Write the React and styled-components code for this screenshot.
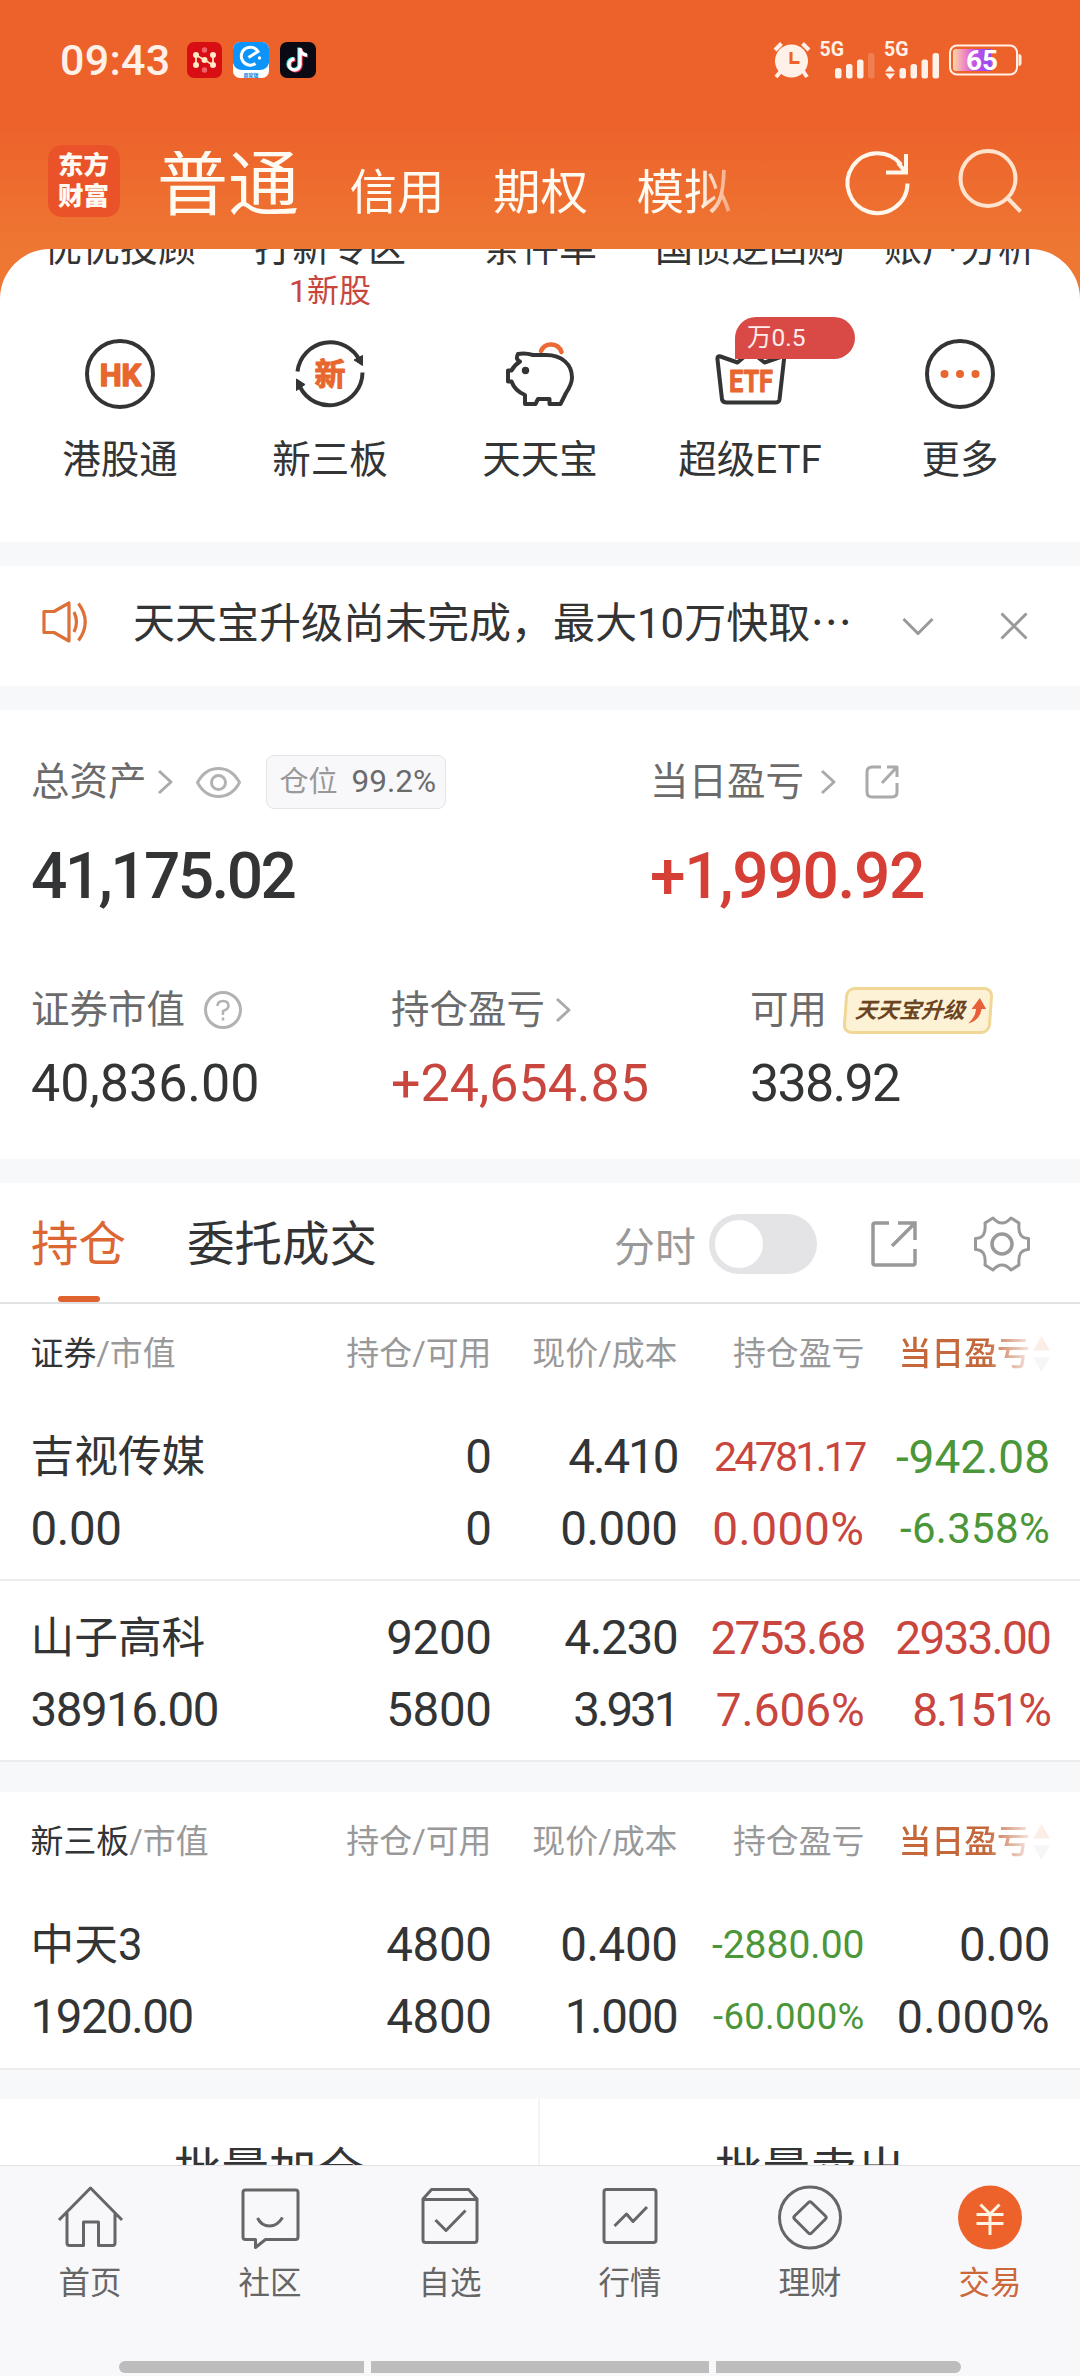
import React from "react";
import styled, { createGlobalStyle, css } from "styled-components";

const Global = createGlobalStyle`
  * { box-sizing: border-box; }
  body { margin: 0; background: #fff; }
  svg { display: block; flex: none; overflow: visible; }
`;

const sans = `Roboto, "Noto Sans CJK SC", sans-serif`;
const ink = "#333435";
const orange = "#dc6733";
const red = "#c9463f";
const green = "#4b9638";
const tones = { ink, red, green };

const Screen = styled.div`
  width: 1080px;
  height: 2376px;
  display: flex;
  flex-direction: column;
  overflow: hidden;
  background: #ee7733;
  color: ${ink};
  font-family: ${sans};
  white-space: nowrap;
`;

/* ---------- header ---------- */
const Header = styled.header`
  height: 249px;
  flex: none;
  background: linear-gradient(#ed622b 0, #ed622b 125px, #ee7733 249px);
`;
const StatusBar = styled.div`
  height: 120px;
  display: flex;
  align-items: center;
  padding: 0 58px 0 60px;
  color: #fff0e8;
`;
const Clock = styled.span`
  width: 127px;
  font-size: 43px;
  line-height: 50px;
  font-weight: 500;
  letter-spacing: 0.3px;
`;
const AppIcons = styled.div`
  display: flex;
  gap: 11px;
`;
const StatusRight = styled.div`
  margin-left: auto;
  display: flex;
  align-items: center;
`;
const NavBar = styled.div`
  height: 129px;
  display: flex;
  align-items: flex-start;
  padding: 25px 57px 0 48px;
  color: #fffaf2;
`;
const Logo = styled.div`
  width: 72px;
  height: 72px;
  border-radius: 14px;
  background: #ea5329;
  padding: 5px 10px;
  font-size: 25.5px;
  line-height: 31px;
  font-weight: 900;
  margin-right: 37px;
`;
const AccountTabs = styled.div`
  display: flex;
  align-items: baseline;
  width: 642px;
  height: 80px;
  gap: 48.5px;
  margin-top: 6px;
  mask-image: linear-gradient(90deg, #000 542px, rgba(0, 0, 0, 0.25) 582px);
`;
const AccountTab = styled.span`
  font-size: ${(p) => (p.$on ? 71 : 47.5)}px;
  line-height: 80px;
  margin: ${(p) => (p.$on ? "-6px 2px 0 0" : "0")};
`;
const NavIcons = styled.div`
  display: flex;
  gap: 49px;
  margin-left: auto;
  padding-top: 4px;
`;

/* ---------- shortcuts ---------- */
const Sheet = styled.section`
  height: 293px;
  flex: none;
  background: #fff;
  border-radius: 50px 50px 0 0;
  overflow: hidden;
`;
const FiveCols = styled.div`
  display: grid;
  grid-template-columns: repeat(5, 210px);
  justify-content: center;
  text-align: center;
`;
const TopLabels = styled(FiveCols)`
  margin-top: -26px;
  font-size: 38px;
  line-height: 50px;
`;
const HintRow = styled(FiveCols)`
  font-size: 32px;
  line-height: 36px;
  color: ${red};
`;
const TileRow = styled(FiveCols)`
  margin-top: 29px;
`;
const Tile = styled.div`
  position: relative;
  display: flex;
  flex-direction: column;
  align-items: center;
  font-size: 38.5px;
  line-height: 50px;
  gap: 25px;
`;
const Badge = styled.span`
  position: absolute;
  left: 90px;
  top: -21px;
  width: 120px;
  height: 42px;
  border-radius: 21px 21px 21px 0;
  background: #d94a46;
  color: #fdeceb;
  font-size: 24.5px;
  line-height: 42px;
  text-align: left;
  padding-left: 12px;
`;

const Band = styled.div`
  height: ${(p) => p.$h}px;
  flex: none;
  background: #f7f8fa;
  ${(p) => p.$line && css`border-top: 2px solid #ececee;`}
`;

/* ---------- notice ---------- */
const Notice = styled.section`
  height: 120px;
  flex: none;
  display: flex;
  align-items: center;
  background: #fff;
  padding: 0 52px 4px 42px;
  & > svg { margin-top: 4px; }
  & > svg:first-child { margin: 0 0 4px; }
`;
const NoticeText = styled.span`
  margin-left: 43px;
  width: 769px;
  font-size: 42px;
  line-height: 60px;
`;

/* ---------- assets ---------- */
const Assets = styled.section`
  height: 449px;
  flex: none;
  background: #fff;
  padding: 44px 31px 0;
`;
const AssetRow = styled.div`
  display: grid;
  grid-template-columns: ${(p) => p.$cols};
  margin-bottom: ${(p) => p.$mb || 0}px;
`;
const Label = styled.div`
  display: flex;
  align-items: center;
  height: 56px;
  font-size: 38.5px;
  line-height: 56px;
  color: #6b6b6c;
`;
const Gap = styled.i`
  width: ${(p) => p.$w}px;
`;
const Position = styled.span`
  display: flex;
  align-items: center;
  gap: 14px;
  width: 180px;
  height: 54px;
  padding-left: 13px;
  border: 1.5px solid #e4e5e8;
  border-radius: 8px;
  background: #f8f8fb;
  font-size: 29px;
  color: #999;
`;
const Percent = styled.b`
  font-weight: 400;
  font-size: 31.5px;
  color: #6b6b6c;
`;
const Amount = styled.div`
  font-size: ${(p) => (p.$big ? 64 : 52)}px;
  line-height: ${(p) => (p.$big ? 76 : 60)}px;
  font-weight: ${(p) => (p.$big ? 500 : 400)};
  letter-spacing: ${(p) => p.$ls || 0}px;
  color: ${(p) => (p.$up ? (p.$big ? "#d53f36" : red) : ink)};
  margin-top: ${(p) => (p.$big ? 29 : 16)}px;
`;
const Upgrade = styled.span`
  display: flex;
  align-items: center;
  width: 148px;
  height: 47px;
  padding-left: 8px;
  gap: 2px;
  border: 3px solid #f0d795;
  border-radius: 9px;
  background: #fdf2d6;
  transform: skewX(-4deg);
  color: #6b4423;
  font-size: 22px;
  font-weight: 700;
  font-style: italic;
`;

/* ---------- holdings ---------- */
const HoldTabs = styled.section`
  height: 121px;
  flex: none;
  display: flex;
  background: #fff;
  border-bottom: 2px solid #e1e2e3;
  padding-left: 31px;
`;
const HoldTab = styled.div`
  display: flex;
  flex-direction: column;
  align-items: center;
  justify-content: space-between;
  margin-right: 61px;
  padding-top: 32px;
  font-size: 47.5px;
  line-height: 60px;
  color: ${(p) => (p.$on ? orange : ink)};
  &::after {
    content: "";
    width: 42px;
    height: 6px;
    border-radius: 3px;
    background: ${(p) => (p.$on ? "#e0632f" : "transparent")};
  }
`;
const Tools = styled.div`
  margin-left: auto;
  margin-right: 50px;
  display: flex;
  align-items: center;
  height: 121px;
  color: #999;
  font-size: 41px;
`;
const Switch = styled.span`
  width: 108px;
  height: 60px;
  border-radius: 30px;
  background: #e4e4e6;
  padding: 6px;
  margin: 0 54px 0 13px;
  &::after {
    content: "";
    display: block;
    width: 48px;
    height: 48px;
    border-radius: 50%;
    background: #fff;
  }
`;
const rowGrid = css`
  flex: none;
  display: grid;
  grid-template-columns: 252px 209px 186px 187px 1fr;
  padding: 0 30px 0 30.5px;
  background: #fff;
  & > div { text-align: right; }
  & > div:first-child { text-align: left; }
`;
const TableHead = styled.div`
  ${rowGrid}
  height: 96px;
  line-height: 100px;
  font-size: 32.9px;
  color: #999;
`;
const Dark = styled.span`
  color: ${ink};
`;
const SortCell = styled.div`
  display: flex;
  justify-content: flex-end;
  align-items: center;
  height: 100px;
  gap: 3px;
`;
const SortText = styled.span`
  color: #c4673b;
  font-weight: 500;
  mask-image: linear-gradient(90deg, #000 88px, rgba(0, 0, 0, 0.15) 132px);
`;
const Holding = styled.div`
  ${rowGrid}
  height: ${(p) => (p.$last ? 180 : 181)}px;
  padding-top: 20px;
  border-bottom: ${(p) => (p.$last ? 0 : 2)}px solid #ececee;
`;
const Cell = styled.div`
  height: 72px;
  line-height: 74px;
  font-size: ${(p) => p.$fs || 47.5}px;
  letter-spacing: ${(p) => p.$ls ?? -0.4}px;
  color: ${(p) => tones[p.$tone || "ink"]};
`;

/* ---------- bottom ---------- */
const BatchRow = styled.section`
  height: 66px;
  flex: none;
  overflow: hidden;
  display: grid;
  grid-template-columns: 1fr 1fr;
  background: #fff;
  text-align: center;
  font-size: 47.5px;
  line-height: 60px;
`;
const Batch = styled.div`
  height: 100px;
  padding-top: 42px;
  border-right: ${(p) => (p.$divided ? 2 : 0)}px solid #f4f4f5;
`;
const TabBar = styled.nav`
  flex: 1;
  background: #f8f8fb;
  border-top: 1.5px solid #e2e2e4;
  display: flex;
  flex-direction: column;
  justify-content: space-between;
`;
const Tabs = styled.div`
  display: grid;
  grid-template-columns: repeat(6, 180px);
  padding-top: 20px;
`;
const Tab = styled.div`
  display: flex;
  flex-direction: column;
  align-items: center;
  gap: 11px;
  font-size: 31.5px;
  line-height: 44px;
  color: ${(p) => (p.$on ? "#cb683a" : "#666")};
`;
const GestureBar = styled.div`
  display: grid;
  grid-template-columns: 245px 338px 245px;
  gap: 7px;
  justify-content: center;
  padding-bottom: 3px;
`;
const Segment = styled.span`
  height: 12px;
  background: #bdbdbd;
  border-radius: ${(p) => p.$r || 0};
`;

/* ---------- icons ---------- */
const Stroke = ({ w, h, box, sw = 3, color = "currentColor", children }) => (
  <svg width={w} height={h} viewBox={box || `0 0 ${w} ${h}`} fill="none" stroke={color} strokeWidth={sw} strokeLinejoin="round">
    {children}
  </svg>
);

const Chevron = () => (
  <Stroke w={15} h={24} color="#aaa"><path d="M2 1 14 12 2 23" /></Stroke>
);

const NetIcon = () => (
  <svg width="35" height="36" viewBox="0 0 35 36">
    <rect width="35" height="36" rx="7" fill="#d90e14" />
    <circle cx="17.500" cy="8" r="2.700" fill="#f0626a" />
    <circle cx="17.500" cy="28" r="2.700" fill="#f0626a" />
    <path d="M9 23V13L26 23V13" fill="none" stroke="#ffe3b8" strokeWidth="1.800" />
    {[[9, 13], [9, 23], [26, 13], [26, 23], [17.5, 18]].map(([x, y]) => <circle key={x + "-" + y} cx={x} cy={y} r="3" fill="#ffe9c8" />)}
  </svg>
);
const ElemeIcon = () => (
  <svg width="36" height="36" viewBox="0 0 36 36">
    <rect width="36" height="36" rx="7" fill="#fff" />
    <path d="M0 7a7 7 0 0 1 7-7h22a7 7 0 0 1 7 7v14q-2 7-9 7H9q-7 0-9-7z" fill="#0c94fb" />
    <path d="M22.500 21.500A9 9 0 1 1 25 9.500L15.500 15.500" fill="none" stroke="#fff" strokeWidth="3" />
    <circle cx="26.500" cy="16" r="1.700" fill="#fff" />
    <text x="18" y="34.500" textAnchor="middle" fontSize="5" fontWeight="700" fill="#0c7fe0" fontFamily="Noto Sans CJK SC">商家版</text>
  </svg>
);
const NoteIcon = () => {
  const d = "M20 6v16.500a5.500 5.500 0 1 1-5.500-5.500M20 7q1.500 6 7 6";
  return (
    <svg width="36" height="36" viewBox="0 0 36 36" fill="none" strokeWidth="3.400">
      <rect width="36" height="36" rx="7" fill="#0b0a14" />
      <path d={d} stroke="#25e5e2" transform="translate(-1 -.6)" />
      <path d={d} stroke="#f8325a" transform="translate(1 .8)" />
      <path d={d} stroke="#fff" />
    </svg>
  );
};

const AlarmIcon = () => (
  <svg width="38" height="38" viewBox="0 0 38 38">
    <g stroke="#fff0e8" strokeWidth="4" fill="none">
      <path d="M2 9 8.500 2.500M29.500 2.500 36 9M8 30 3 36M30 30l4 6" />
    </g>
    <circle cx="18.500" cy="20" r="16.500" fill="#fff0e8" />
    <path d="M18 11v10.500h8.500" fill="none" stroke="#ed622b" strokeWidth="3" />
  </svg>
);
const Signal = ({ weak, arrows }) => (
  <svg width={arrows ? 55 : 56} height="37" viewBox="0 0 55 37" fill="#fff0e8">
    <text x="-1" y="14" fontSize="19.500" fontWeight="700" fontFamily="Roboto">5G</text>
    {arrows && <path d="M5 23.500 10 29.500H0zM5 37.500 0 31.500H10z" />}
    {[26, 22, 17.5, 11].map((y, i) => (
      <rect key={y} x={14.500 + i * 11} y={y} width="6.500" height={36.500 - y} rx="2.500" opacity={weak && i === 3 ? 0.2 : 1} />
    ))}
  </svg>
);
const Battery = () => (
  <svg width="73" height="32" viewBox="0 0 73 32">
    <defs>
      <linearGradient id="charge">
        <stop offset="0" stopColor="#fbd9a6" />
        <stop offset=".3" stopColor="#f08ac0" />
        <stop offset=".6" stopColor="#c04fe8" />
        <stop offset="1" stopColor="#8d4df0" />
      </linearGradient>
    </defs>
    <rect x="1" y="1.500" width="67" height="29" rx="7" fill="none" stroke="#fff0e8" strokeWidth="2" />
    <path d="M69.500 10q3 0 3 3v6q0 3-3 3z" fill="#fff0e8" />
    <path d="M7 5h35v22H7q-3 0-3-3V8q0-3 3-3z" fill="url(#charge)" />
    <text x="33" y="26" textAnchor="middle" fontSize="28" fontWeight="700" fill="#fff" fontFamily="Roboto">65</text>
  </svg>
);

const HK = () => (
  <Stroke w={72} h={72} sw={4} color={ink}>
    <circle cx="36" cy="36" r="33" />
    <text x="36.500" y="47.500" textAnchor="middle" fontSize="31" fontWeight="700" fill="#e8672f" stroke="#e8672f" strokeWidth="1.500" fontFamily="Roboto">HK</text>
  </Stroke>
);
const Xin = () => (
  <Stroke w={72} h={72} sw={4} color={ink}>
    <path d="M3.500 33.500A33 33 0 0 1 66 23M68.500 34.500A33 33 0 0 1 6 49" />
    <path d="M60 22 68.500 17.500V27.500zM2.500 52.500V41L11 46.500z" fill={ink} strokeWidth="1" />
    <text x="36" y="47" textAnchor="middle" fontSize="31" fontWeight="700" fill="#e8672f" stroke="#e8672f" strokeWidth="1" fontFamily="Noto Sans CJK SC">新</text>
  </Stroke>
);
const Pig = () => (
  <Stroke w={72} h={72} box="504 337.5 72 72" sw={4} color={ink}>
    <path d="M541 350.500A11 11 0 0 1 561.500 351.500" stroke="#ec6a33" strokeWidth="4.500" strokeLinecap="round" />
    <path d="M518 353.500Q525 352 533 354.500H546C562 354.500 572 364 572 377 572 383 569 388 566 392.500L560.500 403.500H549.500V398.500H538L535.500 403.500H525V394.500Q515 390.500 511.500 381H508V370H511.500Q514 365 520 361 515 359 518 353.500Z" />
    <circle cx="525.500" cy="370" r="3.700" fill={ink} stroke="none" />
  </Stroke>
);
const Etf = () => (
  <Stroke w={72} h={72} box="714 337.5 72 72" sw={4} color={ink}>
    <path d="M717.500 359q-.5-4 3-3l17 6 13-11 14 11 17.500-6q2.500-.5 2 3l-4.500 40q-.5 3-4 3h-49q-3.500 0-4.500-3z" />
    <text x="751" y="391" textAnchor="middle" fontSize="31" fontWeight="700" fill="#e8672f" stroke="#e8672f" strokeWidth="1" fontFamily="Roboto" textLength="44" lengthAdjust="spacingAndGlyphs">ETF</text>
  </Stroke>
);
const More = () => (
  <Stroke w={72} h={72} sw={4} color={ink}>
    <circle cx="36" cy="36" r="33" />
    <g fill="#e8672f" stroke="none"><circle cx="20.500" cy="36" r="4" /><circle cx="36" cy="36" r="4" /><circle cx="51.500" cy="36" r="4" /></g>
  </Stroke>
);

const ShareLarge = () => (
  <Stroke w={46} h={46} sw={3.500} color="#999">
    <path d="M18 2H4Q2 2 2 4V42Q2 44 4 44H42Q44 44 44 42V28M27 2H44V19M44 2 21 25" strokeLinejoin="miter" />
  </Stroke>
);
const ShareSmall = () => (
  <Stroke w={34} h={34} sw={3} color="#aaa">
    <path d="M16 2H7Q2 2 2 7V27Q2 32 7 32H27Q32 32 32 27V18M22 2H32V12M32 2 17 18" />
  </Stroke>
);
const Gear = () => (
  <Stroke w={56} h={56} box="-28 -28 56 56" sw={3} color="#999">
    <path d="M-9-26Q0-16 9-26L17-21C16-10 19-6 26.500-5.500V5.500C19 6 16 10 17 21L9 26Q0 16-9 26L-17 21C-16 10-19 6-26.500 5.500V-5.500C-19-6-16-10-17-21Z" />
    <circle r="10" strokeWidth="3.500" />
  </Stroke>
);
const Sorter = () => (
  <svg width="17" height="36" viewBox="0 0 17 36">
    <path d="M8.500 0 17 14.500H0z" fill="#fbeee7" />
    <path d="M8.500 36 0 21.500H17z" fill="#f6f6f7" />
  </svg>
);

const tabIcons = [
  <path key="0" d="M1.500 34 33 2 64.500 34M9.500 27V57Q9.500 59.500 12 59.500H26V36H41V59.500H55Q57.500 59.500 57.500 57V27" />,
  <path key="1" d="M8 4H58Q60.500 4 60.500 6.500V51Q60.500 53.500 58 53.500H28L18 61.500V53.500H8Q5.500 53.500 5.500 51V6.500Q5.500 4 8 4M20 32Q24 40 32 40T45 31.500" />,
  <path key="2" d="M5.500 13 14 3.500H51L59.500 13V53.500Q59.500 56.500 57 56.500H8Q5.500 56.500 5.500 53.500ZM5.500 13.500H59.500M18 34 28.500 44.500 48 24.500" />,
  <path key="3" d="M9 3.500H56Q58.500 3.500 58.500 6V54Q58.500 56.500 56 56.500H9Q6.500 56.500 6.500 54V6Q6.500 3.500 9 3.500M17 40 29 28 35.500 35.500 49.500 21" />,
  <g key="4"><circle cx="32.500" cy="31.500" r="30.500" /><path d="M31 16.500Q32.500 15 34 16.500L48 30Q49.500 31.500 48 33L34 47Q32.500 48.500 31 47L17 33Q15.500 31.500 17 30Z" /></g>,
  <g key="5"><circle cx="32.500" cy="31.500" r="32" fill="#ed622b" stroke="none" /><path d="M23 18.500 32.500 28 42 18.500M19 28.500H46M19 37.500H46M32.500 28V49" stroke="#fff3e4" /></g>,
];
const tabNames = ["首页", "社区", "自选", "行情", "理财", "交易"];

const Table = ({ title, rows }) => (
  <>
    <TableHead>
      <div><Dark>{title}</Dark>/市值</div>
      <div>持仓/可用</div>
      <div>现价/成本</div>
      <div>持仓盈亏</div>
      <SortCell><SortText>当日盈亏</SortText><Sorter /></SortCell>
    </TableHead>
    {rows.map((cols, i) => (
      <Holding key={i} $last={rows.length === 1}>
        {cols.map((col, j) => (
          <div key={j}>
            {col.map(([text, tone, fs, ls], k) => (
              <Cell key={k} $tone={tone} $fs={fs} $ls={ls}>{text}</Cell>
            ))}
          </div>
        ))}
      </Holding>
    ))}
  </>
);

const mainRows = [
  [
    [["吉视传媒", "ink", 43.7, 0], ["0.00"]],
    [["0"], ["0"]],
    [["4.410", "ink", 47.5, -2], ["0.000"]],
    [["24781.17", "red", 41, -2.7], ["0.000%", "red", 46, 0.5]],
    [["-942.08", "green", 46, 0], ["-6.358%", "green", 42, 0.3]],
  ],
  [
    [["山子高科", "ink", 43.7, 0], ["38916.00", "ink", 47.5, -1.5]],
    [["9200"], ["5800"]],
    [["4.230", "ink", 47.5, -1.2], ["3.931", "ink", 47.5, -3]],
    [["2753.68", "red", 46, -1.9], ["7.606%", "red", 46, -0.1]],
    [["2933.00", "red", 46, -1.8], ["8.151%", "red", 46, -1.9]],
  ],
];
const neeqRows = [
  [
    [["中天3", "ink", 43.7, 0], ["1920.00", "ink", 47.5, -1.5]],
    [["4800"], ["4800"]],
    [["0.400"], ["1.000", "ink", 47.5, -1.3]],
    [["-2880.00", "green", 39, 0], ["-60.000%", "green", 36.5, 0.3]],
    [["0.00"], ["0.000%", "ink", 46.5, 0.4]],
  ],
];

export default function App() {
  return (
    <Screen>
      <Global />
      <Header>
        <StatusBar>
          <Clock>09:43</Clock>
          <AppIcons><NetIcon /><ElemeIcon /><NoteIcon /></AppIcons>
          <StatusRight>
            <AlarmIcon /><Gap $w={9} />
            <Signal weak /><Gap $w={9} />
            <Signal arrows /><Gap $w={9} />
            <Battery />
          </StatusRight>
        </StatusBar>
        <NavBar>
          <Logo>东方<br />财富</Logo>
          <AccountTabs>
            <AccountTab $on>普通</AccountTab>
            <AccountTab>信用</AccountTab>
            <AccountTab>期权</AccountTab>
            <AccountTab>模拟</AccountTab>
          </AccountTabs>
          <NavIcons>
            <Stroke w={64} h={66} sw={4} color="#fff7ec">
              <path d="M61.500 34.500A30 30 0 1 1 55 15.500M60 5V23.500H40M60 23.500 52 14" strokeLinejoin="miter" />
            </Stroke>
            <Stroke w={64} h={66} sw={4} color="#ffe3cf">
              <circle cx="29" cy="29.500" r="27.500" /><path d="M48.500 49 61.500 62.500" />
            </Stroke>
          </NavIcons>
        </NavBar>
      </Header>

      <Sheet>
        <TopLabels>
          {["优优投顾", "打新专区", "条件单", "国债逆回购", "账户分析"].map((t) => <span key={t}>{t}</span>)}
        </TopLabels>
        <HintRow><span /><span>1新股</span></HintRow>
        <TileRow>
          <Tile><HK />港股通</Tile>
          <Tile><Xin />新三板</Tile>
          <Tile><Pig />天天宝</Tile>
          <Tile><Etf />超级ETF<Badge>万0.5</Badge></Tile>
          <Tile><More />更多</Tile>
        </TileRow>
      </Sheet>
      <Band $h={24} />

      <Notice>
        <Stroke w={48} h={42} sw={3.200} color="#dc7038">
          <path d="M2 10.500H12L27 2V40L12 31.500H2ZM32 11Q37 21 32 31M36.500 2.500Q50 21 36.500 39.500" />
        </Stroke>
        <NoticeText>天天宝升级尚未完成，最大10万快取⋯</NoticeText>
        <Stroke w={32} h={18} color="#999"><path d="M1.500 2 16 16.500 30.500 2" /></Stroke>
        <Gap $w={66} />
        <Stroke w={28} h={28} color="#999"><path d="M1.500 1.500 26.500 26.500M26.500 1.500 1.500 26.500" /></Stroke>
      </Notice>
      <Band $h={24} />

      <Assets>
        <AssetRow $cols="619px 1fr" $mb={67}>
          <div>
            <Label>
              总资产<Gap $w={10} /><Chevron /><Gap $w={24} />
              <Stroke w={45} h={31} color="#b2b2b2">
                <path d="M1.500 15.500Q9 1.500 22.500 1.500T43.500 15.500Q36 29.500 22.500 29.500T1.500 15.500Z" /><circle cx="22.500" cy="15.500" r="7" />
              </Stroke>
              <Gap $w={25} />
              <Position>仓位<Percent>99.2%</Percent></Position>
            </Label>
            <Amount $big $ls={-2.6}>41,175.02</Amount>
          </div>
          <div>
            <Label>当日盈亏<Gap $w={16} /><Chevron /><Gap $w={30} /><ShareSmall /></Label>
            <Amount $big $up $ls={-1.3}>+1,990.92</Amount>
          </div>
        </AssetRow>
        <AssetRow $cols="360px 359px 1fr">
          <div>
            <Label>
              证券市值<Gap $w={19} />
              <Stroke w={38} h={38} color="#b2b2b2">
                <circle cx="19" cy="19" r="17.500" />
                <path d="M13.500 15Q13.500 10 19 10T24.500 15Q24.500 18 19 20V24M19 26.500V29.500" strokeWidth="2.500" />
              </Stroke>
            </Label>
            <Amount>40,836.00</Amount>
          </div>
          <div>
            <Label>持仓盈亏<Gap $w={10} /><Chevron /></Label>
            <Amount $up>+24,654.85</Amount>
          </div>
          <div>
            <Label>
              可用<Gap $w={17} />
              <Upgrade>
                天天宝升级
                <svg width="19" height="26" viewBox="0 0 19 26"><path d="M12 0 19 11H14.500Q14 22 2 25.500 9 19 9 11H4.500Z" fill="#e7603a" /></svg>
              </Upgrade>
            </Label>
            <Amount $ls={-1.7}>338.92</Amount>
          </div>
        </AssetRow>
      </Assets>
      <Band $h={24} />

      <HoldTabs>
        <HoldTab $on>持仓</HoldTab>
        <HoldTab>委托成交</HoldTab>
        <Tools>
          分时<Switch /><ShareLarge /><Gap $w={57} /><Gear />
        </Tools>
      </HoldTabs>
      <Table title="证券" rows={mainRows} />
      <Band $h={30} />
      <Table title="新三板" rows={neeqRows} />
      <Band $h={31} $line />

      <BatchRow>
        <Batch $divided>批量加仓</Batch>
        <Batch>批量卖出</Batch>
      </BatchRow>
      <TabBar>
        <Tabs>
          {tabNames.map((name, i) => (
            <Tab key={name} $on={i === 5}>
              <Stroke w={65} h={65} box="0.5 0 65 65" color="#666">{tabIcons[i]}</Stroke>
              {name}
            </Tab>
          ))}
        </Tabs>
        <GestureBar>
          <Segment $r="6px 0 0 6px" /><Segment /><Segment $r="0 6px 6px 0" />
        </GestureBar>
      </TabBar>
    </Screen>
  );
}
